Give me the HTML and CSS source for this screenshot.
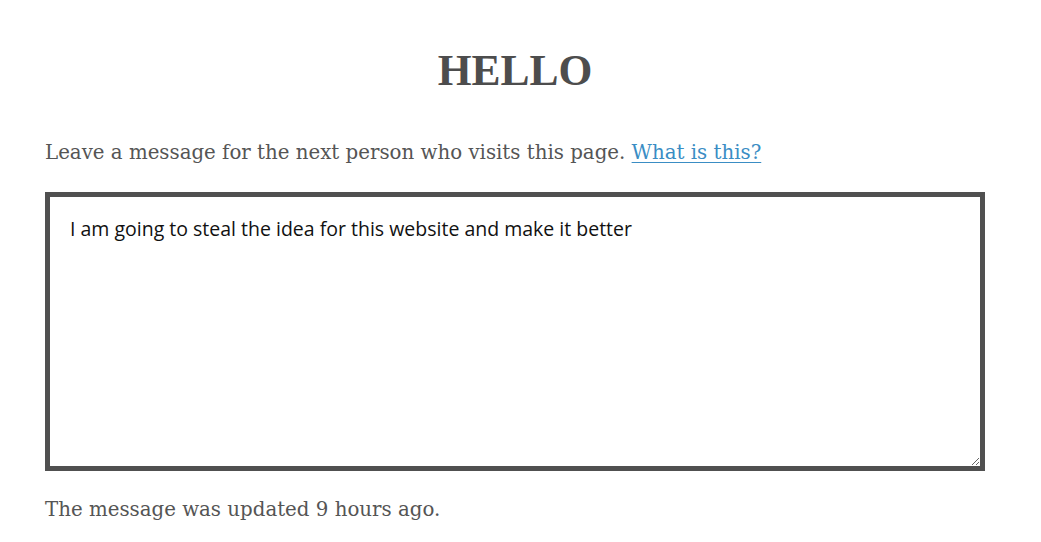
FILE: index.html
```html
<!DOCTYPE html>
<html>
<head>
<meta charset="utf-8">
<link rel="stylesheet" href="styles.css">
</head>
<body>
<main class="page">
  <h1 class="title">HELLO</h1>
  <p class="intro">Leave a message for the next person who visits this page. <a class="link" href="#">What is this?</a></p>
  <textarea class="message">I am going to steal the idea for this website and make it better</textarea>
  <p class="status">The message was updated 9 hours ago.</p>
</main>
</body>
</html>
```
FILE: styles.css
```css
html, body {
  margin: 0;
  padding: 0;
  background: #ffffff;
}
.page {
  width: 940px;
  margin-left: 45px;
  display: flex;
  flex-direction: column;
  font-family: "DejaVu Serif", "Liberation Serif", serif;
  color: #555555;
}
.title {
  margin: 44px 0 0 0;
  text-align: center;
  font-family: "Liberation Serif", serif;
  font-weight: 700;
  font-size: 43.5px;
  line-height: 52px;
  color: #4d4d4d;
}
.intro {
  margin: 42px 0 0 0;
  font-size: 19.8px;
  line-height: 30px;
}
.link {
  color: #3a8dc4;
  text-decoration: underline;
  text-underline-offset: 3px;
}
.message {
  box-sizing: border-box;
  width: 940px;
  height: 279px;
  margin-top: 24px;
  border: 5px solid #505050;
  padding: 19px 20px;
  font-family: "Open Sans", "Noto Sans", sans-serif;
  font-size: 19.5px;
  line-height: 26px;
  color: #111111;
  background: #ffffff;
  resize: vertical;
  outline: none;
}
.status {
  margin: 24px 0 0 0;
  font-size: 19.8px;
  line-height: 30px;
}
```
